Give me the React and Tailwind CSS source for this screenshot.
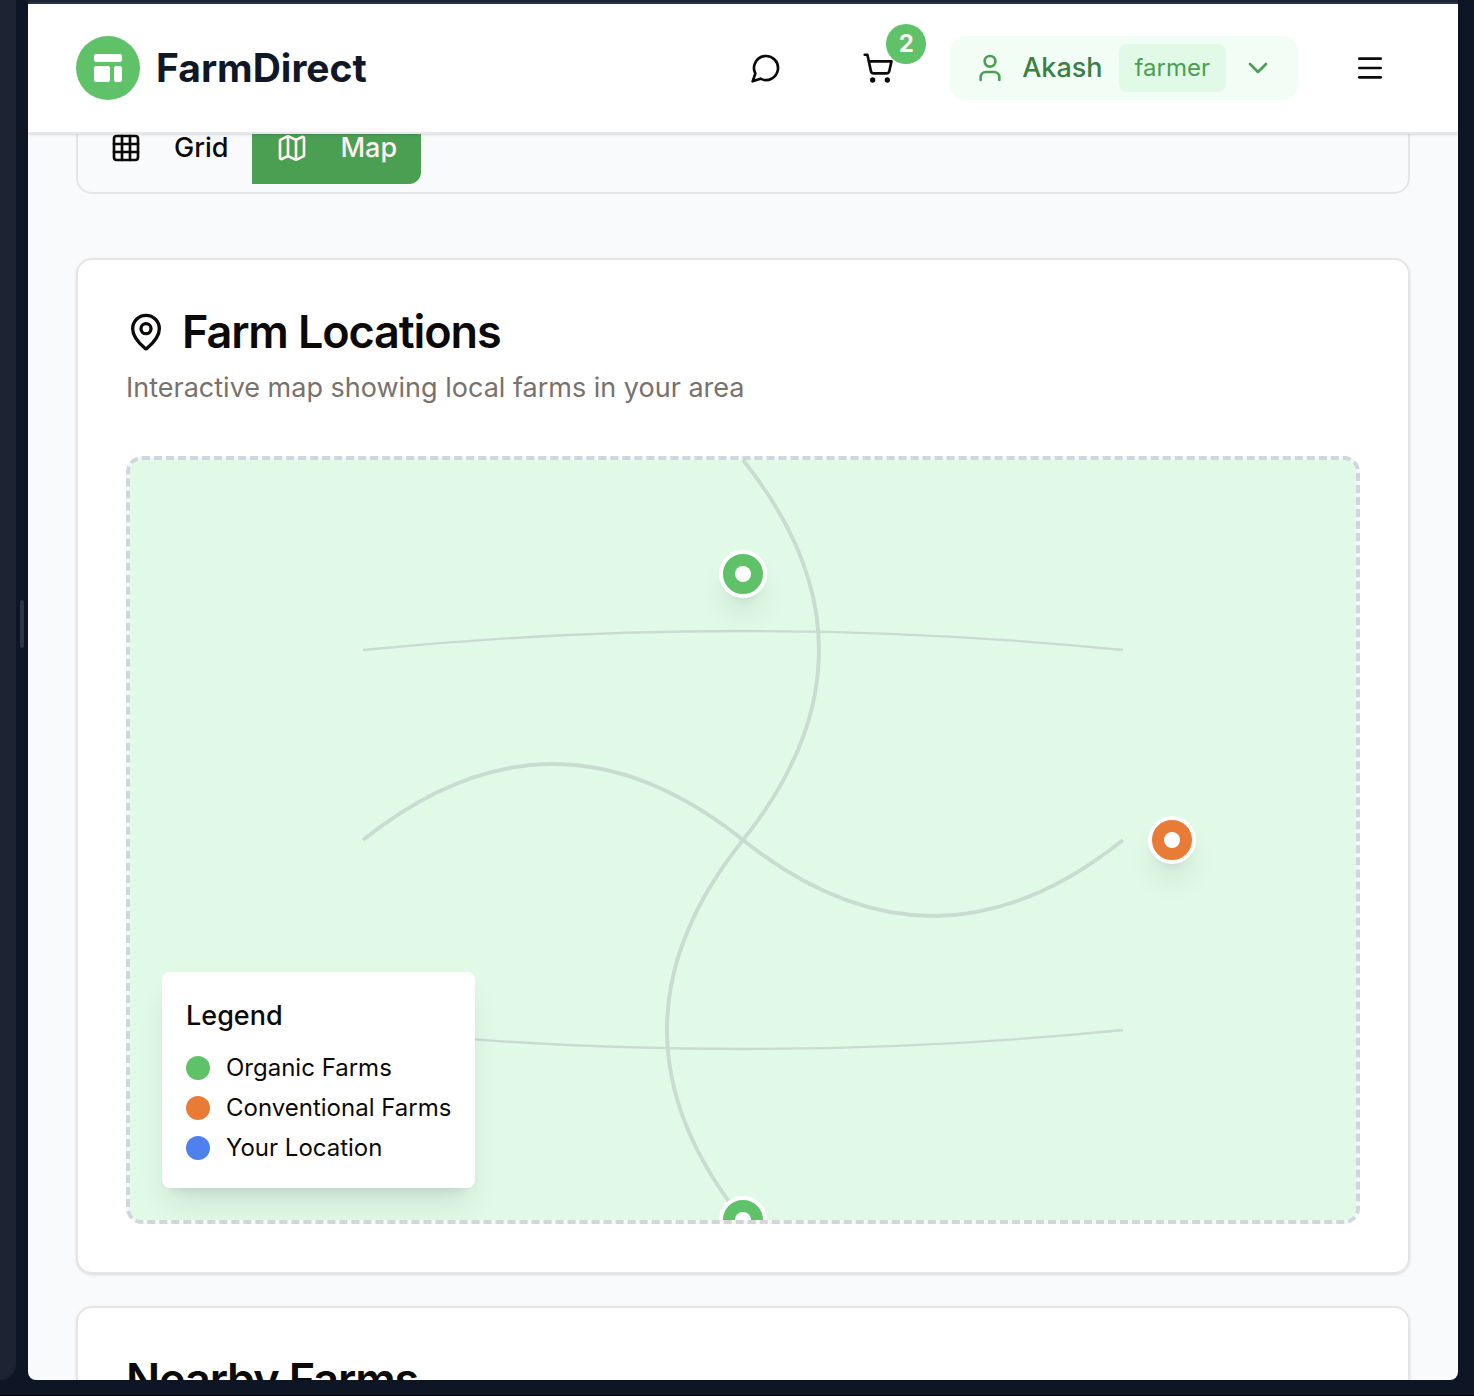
import React from 'react';
import { ShoppingCart, User, ChevronDown, Menu, Grid3x3, Map, MapPin } from 'lucide-react';

const PINS = [
  { name: 'Green Valley Farm', left: '50%', top: '15%', color: 'bg-[#5fc269]' },
  { name: 'Sunrise Farm', left: '85%', top: '50%', color: 'bg-[#e87b35]' },
  { name: 'Riverside Farm', left: '50%', top: '100%', color: 'bg-[#5fc269]' },
];

const LEGEND = [
  { label: 'Organic Farms', color: 'bg-[#5fc269]' },
  { label: 'Conventional Farms', color: 'bg-[#e87b35]' },
  { label: 'Your Location', color: 'bg-[#4f81ee]' },
];

function ChatIcon() {
  return (
    <svg
      viewBox="0 0 24 24"
      fill="none"
      stroke="currentColor"
      strokeWidth="2"
      strokeLinecap="round"
      strokeLinejoin="round"
      className="size-8"
      aria-hidden="true"
    >
      <path d="M7.9 20A9 9 0 1 0 4 16.1L2 22Z" />
    </svg>
  );
}

function Header() {
  return (
    <header className="relative z-10 flex shrink-0 items-center justify-between border-b-2 border-gray-200 bg-white px-12 py-7 shadow-sm">
      <a href="#home" className="flex items-center gap-4">
        <span className="flex size-16 items-center justify-center rounded-full bg-[#5fc269] text-white">
          <svg viewBox="0 0 20 20" fill="currentColor" className="size-10" aria-hidden="true">
            <path d="M3 4a1 1 0 011-1h12a1 1 0 011 1v2a1 1 0 01-1 1H4a1 1 0 01-1-1V4zM3 10a1 1 0 011-1h6a1 1 0 011 1v6a1 1 0 01-1 1H4a1 1 0 01-1-1v-6zM14 9a1 1 0 00-1 1v6a1 1 0 001 1h2a1 1 0 001-1v-6a1 1 0 00-1-1h-2z" />
          </svg>
        </span>
        <span className="text-[39px] leading-[56px] font-bold text-gray-900">FarmDirect</span>
      </a>
      <div className="flex items-center gap-8">
        <button type="button" aria-label="Messages" className="flex h-18 items-center px-6">
          <ChatIcon />
        </button>
        <button type="button" aria-label="Cart" className="relative flex h-18 items-center px-6">
          <ShoppingCart className="size-8" />
          <span className="absolute -top-2 -right-2 flex size-10 items-center justify-center rounded-full bg-[#5fc269] text-2xl font-bold text-[#fff1f2]">
            2
          </span>
        </button>
        <button type="button" className="flex h-16 items-center gap-4 rounded-2xl bg-[#f2fdf5] px-6 text-[#4b9f52]">
          <User className="size-8" />
          <span className="text-[27px] leading-10 font-medium text-[#3c7f45]">Akash</span>
          <span className="rounded-lg bg-[#e1fae8] px-4 py-2 text-2xl leading-8">farmer</span>
          <ChevronDown className="size-8" />
        </button>
        <button type="button" aria-label="Menu" className="flex h-18 items-center px-6">
          <Menu className="size-8" />
        </button>
      </div>
    </header>
  );
}

function ViewSwitch() {
  return (
    <div className="flex rounded-2xl border-2 border-stone-200 p-2 text-[27px] leading-10 font-medium">
      <button type="button" className="flex h-18 items-center gap-8 rounded-l-xl px-6">
        <Grid3x3 className="size-8" />
        Grid
      </button>
      <button type="button" aria-pressed="true" className="flex h-18 items-center gap-8 rounded-r-xl bg-[#4b9f52] px-6 text-[#fff1f2]">
        <Map className="size-8" />
        Map
      </button>
    </div>
  );
}

function FarmMap() {
  return (
    <div className="relative h-[768px] overflow-hidden rounded-2xl border-4 border-dashed border-gray-300 bg-[#f1f9fa]">
      <div className="absolute inset-0 bg-[#e1fae8]" />
      <svg viewBox="0 0 100 100" fill="none" stroke="#c8dccf" className="absolute inset-0 size-full" aria-hidden="true">
        <path d="M0,50 Q25,30 50,50 T100,50" strokeWidth="0.5" />
        <path d="M50,0 Q70,25 50,50 T50,100" strokeWidth="0.5" />
        <path d="M0,25 Q50,20 100,25" strokeWidth="0.3" />
        <path d="M0,75 Q50,80 100,75" strokeWidth="0.3" />
      </svg>
      {PINS.map((pin) => (
        <button
          key={pin.name}
          type="button"
          aria-label={pin.name}
          className={`absolute flex size-12 -translate-x-1/2 -translate-y-1/2 items-center justify-center rounded-full border-4 border-white shadow-[0_20px_30px_-6px_rgba(0,0,0,0.1),0_8px_12px_-8px_rgba(0,0,0,0.1)] ${pin.color}`}
          style={{ left: pin.left, top: pin.top }}
        >
          <span className="size-4 rounded-full bg-white" />
        </button>
      ))}
      <div className="absolute bottom-8 left-8 rounded-lg bg-white p-6 shadow-[0_20px_30px_-6px_rgba(0,0,0,0.1),0_8px_12px_-8px_rgba(0,0,0,0.1)]">
        <h3 className="mb-4 text-[27px] leading-10 font-medium">Legend</h3>
        <ul className="flex flex-col gap-2 text-2xl leading-8">
          {LEGEND.map((item) => (
            <li key={item.label} className="flex items-center gap-4">
              <span className={`size-6 rounded-full ${item.color}`} />
              {item.label}
            </li>
          ))}
        </ul>
      </div>
    </div>
  );
}

export default function App() {
  return (
    <div className="flex h-screen gap-3 overflow-hidden border-b border-black bg-[#0e1525] pr-4 pb-[15px] font-['Inter',sans-serif] text-stone-950">
      <aside className="flex w-4 shrink-0 rounded-br-2xl bg-[#1c2333]" />
      <div className="relative flex min-w-0 flex-1 flex-col">
        <div className="h-1 shrink-0 border-b-2 border-[#2b3245] bg-[#1c2333]" />
        <div className="absolute top-1/2 -left-2 h-12 w-1 -translate-y-[90px] rounded-full bg-[#2e3444]" />
        <div className="flex min-h-0 flex-1 flex-col overflow-hidden rounded-b-lg bg-[#f9fafc]">
          <Header />
          <main className="-mt-8 min-h-0 flex-1 overflow-hidden px-12">
            <ViewSwitch />
            <section className="mt-16 rounded-2xl border-2 border-stone-200 bg-white p-12 shadow-sm">
              <h2 className="flex items-center gap-4 text-[45px] leading-12 font-semibold tracking-tight">
                <MapPin className="size-10" />
                Farm Locations
              </h2>
              <p className="mt-3 mb-12 text-[27px] leading-10 text-stone-500">
                Interactive map showing local farms in your area
              </p>
              <FarmMap />
            </section>
            <section className="mt-8 rounded-2xl border-2 border-stone-200 bg-white p-12 shadow-sm">
              <h2 className="text-[45px] leading-12 font-semibold tracking-tight">Nearby Farms</h2>
            </section>
          </main>
        </div>
      </div>
    </div>
  );
}
